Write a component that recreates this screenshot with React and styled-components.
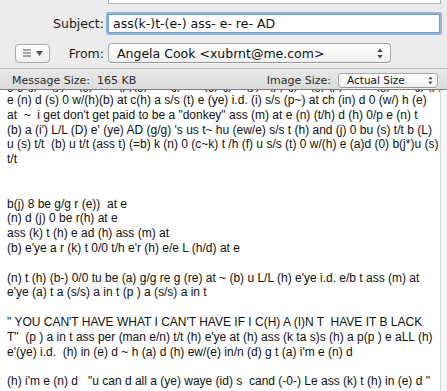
import React from "react";
import styled, { createGlobalStyle } from "styled-components";

const Global = createGlobalStyle`
  html, body { margin: 0; padding: 0; background: #ececec; }
  #root { width: 447px; height: 391px; overflow: hidden; }
`;

const Window = styled.div`
  width: 447px;
  height: 391px;
  display: flex;
  flex-direction: column;
  background: #ececec;
  overflow: hidden;
`;

const Header = styled.div`
  display: flex;
  flex-direction: column;
  background: #ececec;
  height: 68px;
  box-sizing: border-box;
`;

const FieldStub = styled.div`
  margin-left: 108px;
  width: 333px;
  height: 4px;
  box-sizing: border-box;
  background: #fff;
  border: 1px solid #b4b4b4;
  border-top: none;
`;

const Row = styled.div`
  display: grid;
  grid-template-columns: 108px 1fr;
  align-items: center;
  margin-top: ${(p) => p.$top}px;
  height: ${(p) => p.$h}px;
`;

const LabelCell = styled.div`
  display: flex;
  align-items: center;
  justify-content: ${(p) => (p.$spread ? "space-between" : "flex-end")};
  padding-left: ${(p) => (p.$spread ? 15 : 0)}px;
  padding-right: 4px;
  height: 100%;
`;

const Label = styled.span`
  font-family: "DejaVu Sans", "Liberation Sans", sans-serif;
  font-size: 12.5px;
  color: #1a1a1a;
`;

const SubjectInput = styled.div`
  width: 332px;
  height: 19px;
  box-sizing: border-box;
  background: #fff;
  border: 1px solid #6e9bd0;
  box-shadow: 0 0 0 2px rgba(118, 160, 214, 0.75);
  border-radius: 1px;
  display: flex;
  align-items: center;
  padding-left: 4px;
  font-family: "DejaVu Sans", "Liberation Sans", sans-serif;
  font-size: 12.5px;
  color: #111;
  white-space: pre;
`;

const PopupButton = styled.div`
  width: ${(p) => p.$w}px;
  height: ${(p) => p.$h}px;
  box-sizing: border-box;
  border: 1px solid #a9a9a9;
  border-bottom-color: #979797;
  border-radius: 4px;
  background: linear-gradient(#ffffff, #f1f1f1);
  box-shadow: 0 1px 0 rgba(255, 255, 255, 0.6);
  display: flex;
  align-items: center;
  justify-content: space-between;
  padding: 0 ${(p) => p.$pr}px 0 ${(p) => p.$pl}px;
  font-family: "DejaVu Sans", "Liberation Sans", sans-serif;
  font-size: ${(p) => p.$fs}px;
  color: #111;
  white-space: pre;
`;

const MenuButton = styled.div`
  width: 35px;
  height: 19px;
  box-sizing: border-box;
  border: 1px solid #a9a9a9;
  border-radius: 4px;
  background: linear-gradient(#ffffff, #f0f0f0);
  display: flex;
  align-items: center;
  justify-content: center;
  gap: 4px;
  color: #555;
`;

const StatusBar = styled.div`
  height: 22px;
  box-sizing: border-box;
  border-top: 1px solid #bdbdbd;
  border-bottom: 1px solid #7d7d7d;
  background: linear-gradient(#e8e8e8, #dcdcdc);
  display: flex;
  align-items: center;
  padding: 2px 9px 0 12px;
  font-family: "DejaVu Sans", "Liberation Sans", sans-serif;
  font-size: 11px;
  color: #2a2a2a;
`;

const StatusText = styled.span`
  white-space: pre;
  flex: ${(p) => (p.$grow ? 1 : "none")};
  margin-right: ${(p) => p.$mr || 0}px;
`;

const BodyArea = styled.div`
  flex: 1;
  display: flex;
  background: #f5f5f5;
  overflow: hidden;
`;

const Page = styled.div`
  width: 441px;
  flex: none;
  box-sizing: border-box;
  background: #fff;
  border-right: 1px solid #dadada;
  padding-left: 7px;
  overflow: hidden;
  font-family: "Liberation Sans", Arial, sans-serif;
  font-size: 12px;
  line-height: 14.8px;
  color: #111;
`;

const CutLine = styled.div`
  height: 3px;
  overflow: hidden;
  display: flex;
  align-items: flex-end;
  white-space: pre;
`;

const Message = styled.div`
  white-space: pre;
`;

const Arrows = ({ size = 1 }) => (
  <svg width={6 * size} height={11 * size} viewBox="0 0 6 11">
    <path d="M3 0.5 L5.6 4 H0.4 Z" fill="#444" />
    <path d="M3 10.5 L5.6 7 H0.4 Z" fill="#444" />
  </svg>
);

const cutLine =
  "g g (j) e (y) d (g) 0 w/(p)(g) at c(j) a s/(g) (j) e (y) i.(p) (j) s/(g) (p) at ch (g) d 0 (j) (p) (y)";

const lines = [
  "e (n) d (s) 0 w/(h)(b) at c(h) a s/s (t) e (ye) i.d. (i) s/s (p~) at ch (in) d 0 (w/) h (e)",
  'at  ~  i get don\'t get paid to be a "donkey" ass (m) at e (n) (t/h) d (h) 0/p e (n) t',
  "(b) a (i') L/L (D) e' (ye) AD (g/g) 's us t~ hu (ew/e) s/s t (h) and (j) 0 bu (s) t/t b (L)",
  "u (s) t/t  (b) u t/t (ass t) (=b) k (n) 0 (c~k) t /h (f) u s/s (t) 0 w/(h) e (a)d (0) b(j*)u (s)",
  "t/t",
  "",
  "",
  "b(j) 8 be g/g r (e))  at e",
  "(n) d (j) 0 be r(h) at e",
  "ass (k) t (h) e ad (h) ass (m) at",
  "(b) e'ye a r (k) t 0/0 t/h e'r (h) e/e L (h/d) at e",
  "",
  "(n) t (h) (b-) 0/0 tu be (a) g/g re g (re) at ~ (b) u L/L (h) e'ye i.d. e/b t ass (m) at",
  "e'ye (a) t a (s/s) a in t (p ) a (s/s) a in t",
  "",
  '" YOU CAN\'T HAVE WHAT I CAN\'T HAVE IF I C(H) A (I)N T  HAVE IT B LACK',
  'T"  (p ) a in t ass per (man e/n) t/t (h) e\'ye at (h) ass (k ta s)s (h) a p(p ) e aLL (h)',
  "e'(ye) i.d.  (h) in (e) d ~ h (a) d (h) ew/(e) in/n (d) g t (a) i'm e (n) d",
  "",
  '(h) i\'m e (n) d   "u can d all a (ye) waye (id) s  cand (-0-) Le ass (k) t (h) in (e) d "',
];

export default function App() {
  return (
    <Window>
      <Global />
      <Header>
        <FieldStub />
        <Row $top={9} $h={21}>
          <LabelCell>
            <Label>Subject:</Label>
          </LabelCell>
          <SubjectInput>ass(k-)t-(e-) ass- e- re- AD</SubjectInput>
        </Row>
        <Row $top={9} $h={20}>
          <LabelCell $spread>
            <MenuButton>
              <svg width="9" height="8" viewBox="0 0 9 8">
                <path d="M0 1 H8 M0 4 H8 M0 7 H8" stroke="#555" strokeWidth="1" />
              </svg>
              <svg width="7" height="5" viewBox="0 0 7 5">
                <path d="M0 0 H7 L3.5 5 Z" fill="#555" />
              </svg>
            </MenuButton>
            <Label>From:</Label>
          </LabelCell>
          <PopupButton $w={283} $h={20} $pl={8} $pr={7} $fs={12.5}>
            <span>Angela Cook &lt;xubrnt@me.com&gt;</span>
            <Arrows />
          </PopupButton>
        </Row>
      </Header>
      <StatusBar>
        <StatusText $grow>Message Size:  165 KB</StatusText>
        <StatusText $mr={7}>Image Size:</StatusText>
        <PopupButton $w={100} $h={15} $pl={8} $pr={4} $fs={10.5}>
          <span>Actual Size</span>
          <Arrows size={0.8} />
        </PopupButton>
      </StatusBar>
      <BodyArea>
        <Page>
          <CutLine>
            <span>{cutLine}</span>
          </CutLine>
          <Message>{lines.join("\n")}</Message>
        </Page>
      </BodyArea>
    </Window>
  );
}
